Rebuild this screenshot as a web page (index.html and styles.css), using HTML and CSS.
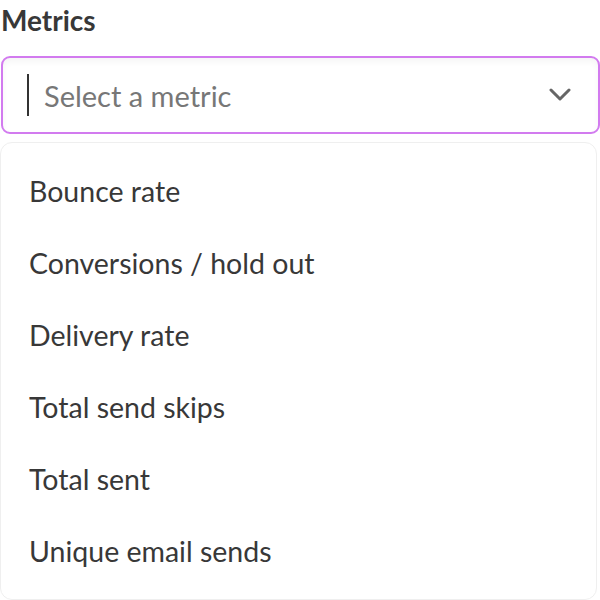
FILE: index.html
```html
<!DOCTYPE html>
<html lang="en">
<head>
    <meta charset="UTF-8">
    <meta name="viewport" content="width=device-width, initial-scale=1.0">
    <title>Metrics</title>
    <link rel="stylesheet" href="styles.css">
</head>
<body>
    <div class="field">
        <label class="label" for="metric">Metrics</label>
        <div class="select">
            <span class="caret"></span>
            <span class="placeholder" id="metric">Select a metric</span>
            <svg class="chevron" width="22" height="14" viewBox="0 0 22 14">
                <path d="M2 2 L11 11 L20 2" fill="none" stroke="#666" stroke-width="3" stroke-linecap="round" stroke-linejoin="round"/>
            </svg>
        </div>
        <ul class="menu">
            <li class="option">Bounce rate</li>
            <li class="option">Conversions / hold out</li>
            <li class="option">Delivery rate</li>
            <li class="option">Total send skips</li>
            <li class="option">Total sent</li>
            <li class="option">Unique email sends</li>
        </ul>
    </div>
</body>
</html>
```

FILE: styles.css
```css
body {
    margin: 0;
    font-family: Lato, "Open Sans", sans-serif;
    color: #333;
    background: #fff;
}
.field {
    width: 600px;
}
.label {
    display: block;
    font-size: 28px;
    font-weight: 700;
    line-height: 40px;
    padding-left: 1px;
    margin-bottom: 16px;
    color: #383838;
}
.select {
    display: flex;
    align-items: center;
    box-sizing: border-box;
    width: 599px;
    height: 78px;
    margin-left: 1px;
    padding: 0 24px;
    border: 2px solid #d27bef;
    border-radius: 9px;
    box-shadow: inset 0 4px 6px rgba(0, 0, 0, 0.04);
}
.caret {
    width: 2px;
    height: 42px;
    background: #333;
    margin-right: 15px;
}
.placeholder {
    flex: 1;
    font-size: 29px;
    color: #777;
}
.chevron {
    margin-right: 3px;
}
.menu {
    list-style: none;
    margin: 8px 0 0;
    padding: 12px 0;
    width: 597px;
    border: 1px solid #efefef;
    border-radius: 12px;
    box-sizing: border-box;
}
.option {
    height: 72px;
    line-height: 72px;
    padding-left: 28px;
    font-size: 28.5px;
    color: #383838;
}
```
